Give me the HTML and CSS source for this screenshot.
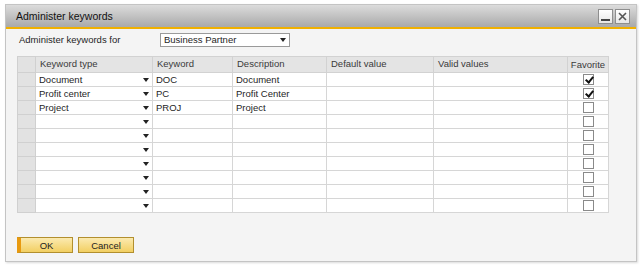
FILE: index.html
```html
<!DOCTYPE html>
<html>
<head>
<meta charset="utf-8">
<link rel="stylesheet" href="styles.css">
</head>
<body>
<div class="window">
  <div class="titlebar">
    <span class="title">Administer keywords</span>
    <div class="winbtns">
      <span class="wbtn"><svg width="13" height="13" viewBox="0 0 13 13"><rect x="2" y="9" width="9" height="2" fill="#444"/></svg></span>
      <span class="wbtn"><svg width="13" height="13" viewBox="0 0 13 13"><path d="M3 3 L10 10 M10 3 L3 10" stroke="#555" stroke-width="1.6"/></svg></span>
    </div>
  </div>
  <div class="goldline"></div>
  <div class="content">
    <div class="forrow">
      <span class="forlabel">Administer keywords for</span>
      <div class="combo"><span>Business Partner</span><span class="arrow"></span></div>
    </div>
    <table class="grid">
      <colgroup>
        <col class="c0"><col class="c1"><col class="c2"><col class="c3"><col class="c4"><col class="c5"><col class="c6">
      </colgroup>
      <thead>
        <tr><th class="rh"></th><th>Keyword type</th><th>Keyword</th><th>Description</th><th>Default value</th><th>Valid values</th><th class="fav">Favorite</th></tr>
      </thead>
      <tbody>
        <tr><td class="rh"></td><td class="dd"><span>Document</span><span class="arrow"></span></td><td>DOC</td><td>Document</td><td></td><td></td><td class="fav"><span class="cb on"></span></td></tr>
        <tr><td class="rh"></td><td class="dd"><span>Profit center</span><span class="arrow"></span></td><td>PC</td><td>Profit Center</td><td></td><td></td><td class="fav"><span class="cb on"></span></td></tr>
        <tr><td class="rh"></td><td class="dd"><span>Project</span><span class="arrow"></span></td><td>PROJ</td><td>Project</td><td></td><td></td><td class="fav"><span class="cb"></span></td></tr>
        <tr><td class="rh"></td><td class="dd"><span></span><span class="arrow"></span></td><td></td><td></td><td></td><td></td><td class="fav"><span class="cb"></span></td></tr>
        <tr><td class="rh"></td><td class="dd"><span></span><span class="arrow"></span></td><td></td><td></td><td></td><td></td><td class="fav"><span class="cb"></span></td></tr>
        <tr><td class="rh"></td><td class="dd"><span></span><span class="arrow"></span></td><td></td><td></td><td></td><td></td><td class="fav"><span class="cb"></span></td></tr>
        <tr><td class="rh"></td><td class="dd"><span></span><span class="arrow"></span></td><td></td><td></td><td></td><td></td><td class="fav"><span class="cb"></span></td></tr>
        <tr><td class="rh"></td><td class="dd"><span></span><span class="arrow"></span></td><td></td><td></td><td></td><td></td><td class="fav"><span class="cb"></span></td></tr>
        <tr><td class="rh"></td><td class="dd"><span></span><span class="arrow"></span></td><td></td><td></td><td></td><td></td><td class="fav"><span class="cb"></span></td></tr>
        <tr><td class="rh"></td><td class="dd"><span></span><span class="arrow"></span></td><td></td><td></td><td></td><td></td><td class="fav"><span class="cb"></span></td></tr>
      </tbody>
    </table>
    <div class="buttons">
      <button class="btn ok">OK</button>
      <button class="btn">Cancel</button>
    </div>
  </div>
</div>
</body>
</html>
```
FILE: styles.css
```css
* { box-sizing: border-box; }
html, body { margin: 0; padding: 0; background: #ffffff; }
body {
  font-family: "Liberation Sans", Arial, sans-serif;
  font-size: 9.5px;
  line-height: 12px;
  color: #1e1e1e;
  width: 642px;
  height: 267px;
  overflow: hidden;
}
.window {
  margin: 4px 0 0 5px;
  width: 632px;
  height: 258px;
  border: 1px solid #c4c4c4;
  background: #f4f4f4;
  display: flex;
  flex-direction: column;
  box-shadow: 1px 1px 2px rgba(0,0,0,0.15);
}
.titlebar {
  height: 22px;
  background: linear-gradient(#dcdcdc, #a9a9a9);
  display: flex;
  align-items: center;
  justify-content: space-between;
  padding: 0 6px 0 10px;
}
.title { font-size: 10.5px; color: #111; }
.winbtns { display: flex; gap: 2px; }
.wbtn {
  width: 15px; height: 15px;
  background: linear-gradient(#ffffff, #e6e6e6);
  border: 1px solid #8e8e8e;
  display: flex; align-items: center; justify-content: center;
}
.goldline { height: 2px; background: #f0b000; }
.content { padding: 4px 0 0 11px; display: flex; flex-direction: column; }
.forrow { display: flex; align-items: center; height: 14px; margin-bottom: 9px; }
.forlabel { width: 143px; padding-left: 2px; }
.combo {
  width: 130px; height: 14px;
  background: #fff;
  border: 1px solid #9a9a9a;
  display: flex; align-items: center; justify-content: space-between;
  padding: 0 3px 0 3px;
}
.arrow {
  width: 0; height: 0;
  border-left: 3px solid transparent;
  border-right: 3px solid transparent;
  border-top: 4px solid #222;
}
.grid {
  border-collapse: collapse;
  table-layout: fixed;
  width: 591px;
}
.c0 { width: 18px; } .c1 { width: 117px; } .c2 { width: 80px; } .c3 { width: 94px; }
.c4 { width: 107px; } .c5 { width: 134px; } .c6 { width: 41px; }
.grid th {
  height: 16px;
  background: #e4e4e4;
  border: 1px solid #d2d2d2;
  font-weight: normal;
  text-align: left;
  padding: 0 4px 2px 4px;
  color: #3a3a3a;
}
.grid th.fav, .grid td.fav { text-align: center; padding: 0; }
.grid td {
  height: 14px;
  background: #fff;
  border: 1px solid #d6d6d6;
  padding: 0 3px;
  white-space: nowrap;
  overflow: hidden;
}
.grid .rh { background: #e2e2e2; border-color: #d0d0d0; }
.dd span:first-child { display: inline-block; width: 104px; vertical-align: middle; }
.dd .arrow { display: inline-block; vertical-align: middle; }
.cb {
  display: inline-block;
  width: 11px; height: 11px;
  border: 1px solid #8a8a8a;
  background: #fff;
  vertical-align: middle;
  position: relative;
}
.cb.on::after {
  content: "";
  position: absolute;
  left: 3px; top: 0px;
  width: 3px; height: 6px;
  border-right: 2px solid #111;
  border-bottom: 2px solid #111;
  transform: rotate(40deg);
}
.buttons { display: flex; gap: 5px; margin-top: 24px; padding-left: 0; }
.btn {
  font-family: inherit;
  font-size: 9.5px;
  color: #222;
  width: 56px; height: 16px;
  padding: 0;
  border: 1px solid #b28f2e;
  background: linear-gradient(#fbeab0, #f2cf62);
}
.btn.ok { border-left: 4px solid #e89a10; }
```
